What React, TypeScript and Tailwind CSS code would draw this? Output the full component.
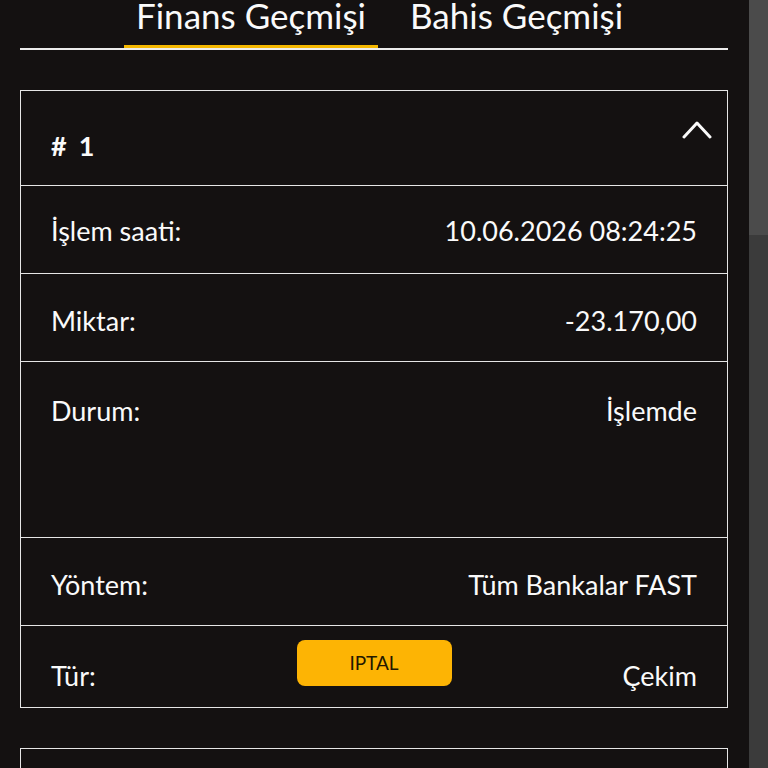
type Row = {
  label: string
  value: string
  pad: string
}

const rows: Row[] = [
  { label: 'İşlem saati:', value: '10.06.2026 08:24:25', pad: 'h-[88px] items-center pt-[2px]' },
  { label: 'Miktar:', value: '-23.170,00', pad: 'h-[88px] items-center pt-[6px]' },
  { label: 'Durum:', value: 'İşlemde', pad: 'h-[176px] items-start pt-[31px]' },
  { label: 'Yöntem:', value: 'Tüm Bankalar FAST', pad: 'h-[88px] items-center pt-[6px]' },
]

export default function App() {
  return (
    <div className="flex h-[768px] overflow-hidden bg-[#141111] text-[#fafafa] font-['Lato','Liberation_Sans',sans-serif]">
      <main className="flex-1 pl-5 pr-[21px]">
        <div className="-mt-[6px] flex gap-[20px] border-b-2 border-[#ececec] pl-[104px]">
          <button className="border-b-[3px] border-[#f5b800] px-3 pb-[9px] text-[35px] leading-[42px]">Finans Geçmişi</button>
          <button className="border-b-[3px] border-transparent px-3 pb-[9px] text-[35px] leading-[42px]">Bahis Geçmişi</button>
        </div>

        <div className="mt-10 border border-[#e6e6e6]">
          <div className="flex h-[94px] items-start justify-between pl-[30px] pr-[15px]">
            <span className="pt-[35px] text-[27px] font-bold leading-[40px]">
              #<span className="ml-[12px]">1</span>
            </span>
            <svg className="mt-[29px]" width="30" height="19" viewBox="0 0 30 19" fill="none" stroke="currentColor" strokeWidth="3" strokeLinecap="round" strokeLinejoin="round">
              <polyline points="2,17 15,3 28,17" />
            </svg>
          </div>
          {rows.map((row) => (
            <div key={row.label} className={`flex justify-between border-t border-[#e6e6e6] px-[30px] text-[27px] leading-[36px] ${row.pad}`}>
              <span>{row.label}</span>
              <span>{row.value}</span>
            </div>
          ))}
          <div className="grid h-[82px] grid-cols-[1fr_auto_1fr] border-t border-[#e6e6e6] px-[30px] text-[27px] leading-[36px]">
            <span className="self-end pb-[13px]">Tür:</span>
            <span className="mt-[14px] flex h-[46px] w-[155px] items-center justify-center self-start rounded-[8px] bg-[#fdb404] text-[19px] text-[#231800]">IPTAL</span>
            <span className="self-end pb-[13px] text-right">Çekim</span>
          </div>
        </div>

        <div className="mt-10 h-[120px] border border-[#e6e6e6]" />
      </main>
      <div className="w-[19px] bg-[#3b3b3b]">
        <div className="h-[235px] bg-[#4b4b4b]" />
      </div>
    </div>
  )
}
